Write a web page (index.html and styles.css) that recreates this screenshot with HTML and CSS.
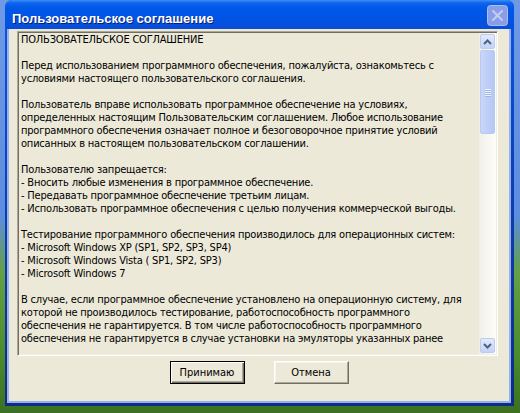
FILE: index.html
```html
<!DOCTYPE html>
<html lang="ru">
  <head>
    <meta charset="UTF-8" />
    <title>Пользовательское соглашение</title>
    <link rel="stylesheet" href="styles.css">
  </head>
  <body>
    <div class="desktop">
      <div class="window">
        <!-- Заголовок окна -->
        <div class="titlebar">
          <span class="title">Пользовательское соглашение</span>
          <button type="button" class="close" aria-label="Закрыть">
            <svg width="21" height="21" viewBox="0 0 21 21">
              <rect x="0.5" y="0.5" width="20" height="20" rx="3" fill="#8a9ee8" stroke="#aebcf0" />
              <path d="M6 6 L15 15 M15 6 L6 15" stroke="#c3cdf3" stroke-width="2" stroke-linecap="round" />
            </svg>
          </button>
        </div>

        <div class="client">
          <!-- Текст соглашения -->
          <div class="agreement">
<div class="agreement-text">ПОЛЬЗОВАТЕЛЬСКОЕ СОГЛАШЕНИЕ

Перед использованием программного обеспечения, пожалуйста, ознакомьтесь с
условиями настоящего пользовательского соглашения.

Пользователь вправе использовать программное обеспечение на условиях,
определенных настоящим Пользовательским соглашением. Любое использование
программного обеспечения означает полное и безоговорочное принятие условий
описанных в настоящем пользовательском соглашении.

Пользователю запрещается:
- Вносить любые изменения в программное обеспечение.
- Передавать программное обеспечение третьим лицам.
- Использовать программное обеспечения с целью получения коммерческой выгоды.

Тестирование программного обеспечения производилось для операционных систем:
- Microsoft Windows XP (SP1, SP2, SP3, SP4)
- Microsoft Windows Vista ( SP1, SP2, SP3)
- Microsoft Windows 7

В случае, если программное обеспечение установлено на операционную систему, для
которой не производилось тестирование, работоспособность программного
обеспечения не гарантируется. В том числе работоспособность программного
обеспечения не гарантируется в случае установки на эмуляторы указанных ранее</div>
            <div class="scrollbar">
              <div class="sb-btn">
                <svg width="9" height="6" viewBox="0 0 9 6"><path d="M1 5 L4.5 1.5 L8 5" fill="none" stroke="#4d6185" stroke-width="2" /></svg>
              </div>
              <div class="sb-track">
                <div class="sb-thumb">
                  <span></span><span></span><span></span><span></span>
                </div>
              </div>
              <div class="sb-btn">
                <svg width="9" height="6" viewBox="0 0 9 6"><path d="M1 1 L4.5 4.5 L8 1" fill="none" stroke="#4d6185" stroke-width="2" /></svg>
              </div>
            </div>
          </div>

          <!-- Кнопки -->
          <div class="actions">
            <button type="button" class="btn btn-default">Принимаю</button>
            <button type="button" class="btn">Отмена</button>
          </div>
        </div>
      </div>
    </div>
  </body>
</html>
```

FILE: styles.css
```css
* {
  box-sizing: border-box;
}

body {
  margin: 0;
  font-family: "DejaVu Sans Condensed", "DejaVu Sans", sans-serif;
}

/* Робочий стіл */
.desktop {
  width: 520px;
  height: 413px;
  padding: 0 6px 0 5px;
  overflow: hidden;
  background: linear-gradient(
    to bottom,
    #6f99e3 0%,
    #5d8de0 52%,
    #64a044 66%,
    #4d8c2e 85%,
    #3b7022 100%
  );
}

/* Вікно */
.window {
  height: 406px;
  display: flex;
  flex-direction: column;
  padding: 0 3px 3px 2px;
  border-radius: 7px 7px 0 0;
  background: linear-gradient(to bottom, #0a56e6, #0b42bc 40%, #0b2d85);
}

.titlebar {
  height: 29px;
  margin: 0 -3px 0 -2px;
  padding: 0 6px 0 7px;
  display: flex;
  align-items: flex-start;
  justify-content: space-between;
  border-radius: 7px 7px 0 0;
  background: linear-gradient(
    to bottom,
    #3d8ef5 0,
    #0d64ec 3px,
    #0058e8 8px,
    #0054e3 20px,
    #0a4cd6 100%
  );
}

.title {
  margin-top: 11px;
  font-family: "Liberation Sans", sans-serif;
  font-weight: 700;
  font-size: 13px;
  line-height: 15px;
  color: #fff;
  text-shadow: 1px 1px #0a1e70;
}

.close {
  margin-top: 5px;
  padding: 0;
  border: none;
  background: transparent;
  width: 21px;
  height: 21px;
  display: block;
}

.close svg {
  display: block;
}

/* Клієнтська область */
.client {
  flex: 1;
  display: flex;
  flex-direction: column;
  padding: 2px 11px 0 8px;
  background: #ece9d8;
  border: 2px solid #97b1ec;
  border-top: none;
}

.agreement {
  height: 325px;
  display: flex;
  background: #ece9d8;
  border: 1px solid;
  border-color: #aca899 #fff #fff #aca899;
  box-shadow: inset 1px 1px #716f64, inset -1px -1px #f1efe2;
  padding: 1px;
}

.agreement-text {
  flex: 1;
  padding: 0 2px 1px;
  font-size: 11px;
  line-height: 13px;
  letter-spacing: -0.2px;
  color: #000;
  white-space: pre;
  overflow: hidden;
}

/* Смуга прокрутки */
.scrollbar {
  width: 17px;
  display: flex;
  flex-direction: column;
  background: linear-gradient(to right, #f1efe8, #fdfdf9);
}

.sb-btn {
  height: 15px;
  margin: 1px;
  display: flex;
  align-items: center;
  justify-content: center;
  border: 1px solid #bccbf2;
  border-radius: 2px;
  background: linear-gradient(to bottom, #e2eafc, #c3d2f6);
}

.sb-track {
  flex: 1;
  padding: 0 1px;
}

.sb-thumb {
  height: 84px;
  display: flex;
  flex-direction: column;
  align-items: center;
  justify-content: center;
  gap: 1px;
  border: 1px solid #b9caf2;
  border-radius: 2px;
  background: linear-gradient(to right, #c9d6f7, #bccdf7 60%, #b6c8f4);
}

.sb-thumb span {
  width: 6px;
  height: 1px;
  background: #eef3fe;
  box-shadow: 0 1px #9db5ec;
}

/* Кнопки */
.actions {
  display: flex;
  justify-content: center;
  gap: 29px;
  margin: 5px -11px 0 -8px;
}

.btn {
  width: 75px;
  height: 23px;
  padding: 0;
  font-family: inherit;
  font-size: 11px;
  color: #000;
  background: #ece9d8;
  border: 1px solid;
  border-color: #fff #716f64 #716f64 #fff;
  box-shadow: inset -1px -1px #aca899, inset 1px 1px #f6f5ee;
}

.btn-default {
  border-color: #000;
  box-shadow: inset 1px 1px #fff, inset -1px -1px #716f64, inset -2px -2px #aca899;
}
```
